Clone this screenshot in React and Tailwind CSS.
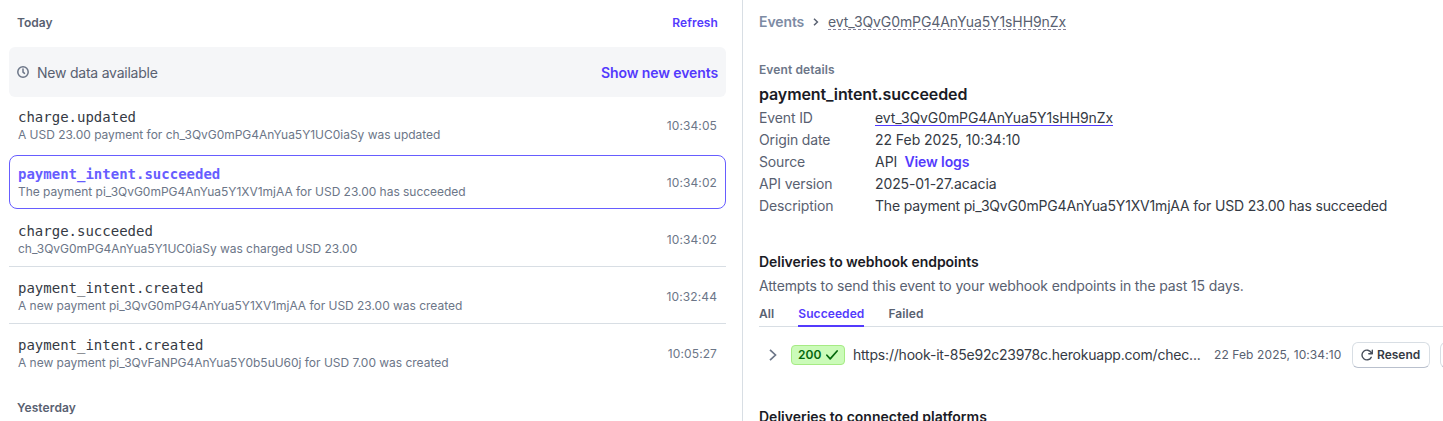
const events = [
  { type: "charge.updated", text: "A USD 23.00 payment for ch_3QvG0mPG4AnYua5Y1UC0iaSy was updated", time: "10:34:05", row: "h-14 pt-[11px]" },
  { type: "payment_intent.succeeded", text: "The payment pi_3QvG0mPG4AnYua5Y1XV1mjAA for USD 23.00 has succeeded", time: "10:34:02", selected: true, row: "mt-[2px] mb-px h-[54px] pt-[9px] rounded-lg border border-[#675dff]" },
  { type: "charge.succeeded", text: "ch_3QvG0mPG4AnYua5Y1UC0iaSy was charged USD 23.00", time: "10:34:02", row: "h-[57px] pt-3 border-b border-[#d8dee4]" },
  { type: "payment_intent.created", text: "A new payment pi_3QvG0mPG4AnYua5Y1XV1mjAA for USD 23.00 was created", time: "10:32:44", row: "h-[57px] pt-3 border-b border-[#d8dee4]" },
  { type: "payment_intent.created", text: "A new payment pi_3QvFaNPG4AnYua5Y0b5uU60j for USD 7.00 was created", time: "10:05:27", row: "h-[57px] pt-3" },
];

function EventRow({ event }) {
  return (
    <div className={`flex justify-between ${event.selected ? "px-2" : "px-[9px]"} ${event.row}`}>
      <div>
        <div className={`font-['DejaVu_Sans_Mono',monospace] text-sm leading-[18px] ${event.selected ? "font-bold text-[#675dff]" : "text-[#353a44]"}`}>{event.type}</div>
        <div className="mt-px text-xs leading-4 tracking-[-0.025px] text-[#6c7688]">{event.text}</div>
      </div>
      <div className="pt-[10px] text-xs leading-4 tracking-[0.1px] text-[#6c7688]">{event.time}</div>
    </div>
  );
}

function EventList() {
  return (
    <section className="w-[743px] shrink-0 border-r border-[#d8dee4] pr-4 pl-[9px]">
      <div className="flex h-[47px] items-start justify-between px-2 pt-[15px] text-xs leading-4 font-semibold">
        <h2 className="text-[#596171]">Today</h2>
        <button className="tracking-[0.1px] text-[#533afd]">Refresh</button>
      </div>
      <div className="flex h-[50px] items-center justify-between rounded-md bg-[#f5f6f8] px-2 pt-[2px] text-sm leading-5">
        <div className="flex items-center tracking-[-0.23px] text-[#596171]">
          <svg className="mr-2 size-3 -translate-y-px" viewBox="0 0 12 12" fill="none" stroke="#6c7688" strokeWidth="1.5" strokeLinecap="round" strokeLinejoin="round">
            <circle cx="6" cy="6" r="5.2" />
            <path d="M6 3v3.2l1.5 1.2" />
          </svg>
          New data available
        </div>
        <button className="font-semibold tracking-[-0.1px] text-[#533afd]">Show new events</button>
      </div>
      {events.map((event, i) => <EventRow key={i} event={event} />)}
      <h2 className="px-2 pt-[19px] text-xs leading-4 font-semibold tracking-[0.1px] text-[#596171]">Yesterday</h2>
    </section>
  );
}

function Detail({ label, children }) {
  return (
    <div className="flex h-[22px] text-sm leading-[22px]">
      <dt className="w-[116px] tracking-[-0.13px] text-[#596171]">{label}</dt>
      <dd className="text-[#353a44]">{children}</dd>
    </div>
  );
}

function EventDetails() {
  return (
    <section className="flex min-w-0 flex-1 flex-col pl-4">
      <nav className="flex h-[62px] shrink-0 items-start pt-3 text-sm leading-5">
        <span className="w-[45px] font-semibold tracking-[-0.1px] text-[#7d8ba4]">Events</span>
        <svg className="mx-[9px] mt-[6px] h-2 w-[6px]" viewBox="0 0 6 8" fill="none" stroke="#596171" strokeWidth="1.5">
          <path d="M1 .8 4.4 4 1 7.2" />
        </svg>
        <span className="h-[18px] border-b border-dashed border-[#87819a] tracking-[-0.1px] text-[#596171]">evt_3QvG0mPG4AnYua5Y1sHH9nZx</span>
      </nav>
      <p className="shrink-0 text-xs leading-4 font-semibold tracking-[0.1px] text-[#6c7688]">Event details</p>
      <h1 className="mt-1 h-[25px] shrink-0 text-base leading-6 font-semibold tracking-[-0.1px] text-[#1a1b25]">payment_intent.succeeded</h1>
      <dl className="shrink-0">
        <Detail label="Event ID"><span className="block h-[19px] border-b border-[#533afd] tracking-[-0.1px]">evt_3QvG0mPG4AnYua5Y1sHH9nZx</span></Detail>
        <Detail label="Origin date"><span className="tracking-[-0.05px]">22 Feb 2025, 10:34:10</span></Detail>
        <Detail label="Source">API<button className="ml-[7px] font-semibold tracking-[-0.1px] text-[#533afd]">View logs</button></Detail>
        <Detail label="API version"><span className="tracking-[-0.1px]">2025-01-27.acacia</span></Detail>
        <Detail label="Description"><span className="tracking-[-0.18px]">The payment pi_3QvG0mPG4AnYua5Y1XV1mjAA for USD 23.00 has succeeded</span></Detail>
      </dl>
      <h2 className="mt-[35px] shrink-0 text-sm leading-5 font-semibold tracking-[-0.04px] text-[#1a1b25]">Deliveries to webhook endpoints</h2>
      <p className="mt-1 shrink-0 text-sm leading-5 tracking-[-0.14px] text-[#596171]">Attempts to send this event to your webhook endpoints in the past 15 days.</p>
      <div className="mt-[9px] flex h-[22px] shrink-0 gap-6 border-b border-[#d8dee4] text-xs leading-4 font-semibold tracking-[0.08px] text-[#596171]">
        <button className="h-[22px] pt-px pb-[5px]">All</button>
        <button className="h-[22px] border-b-2 border-[#533afd] pt-px pb-[3px] text-[#533afd]">Succeeded</button>
        <button className="h-[22px] pt-px pb-[5px]">Failed</button>
      </div>
      <div className="mt-[15px] flex h-[26px] shrink-0 items-center overflow-hidden">
        <svg className="ml-[10px] h-3 w-2 shrink-0" viewBox="0 0 8 12" fill="none" stroke="#6c7688" strokeWidth="1.7">
          <path d="M1 .8 6.5 6 1 11.2" />
        </svg>
        <span className="ml-[14px] flex h-5 w-[54px] shrink-0 items-center justify-between rounded border border-[#a6eb84] bg-[#cbfbb9] px-[6px] text-xs font-semibold text-[#05690d]">
          200
          <svg className="h-[10px] w-3" viewBox="0 0 12 10" fill="none" stroke="currentColor" strokeWidth="1.7" strokeLinecap="round" strokeLinejoin="round">
            <path d="M.9 5.2 4.2 8.9 11.1 1" />
          </svg>
        </span>
        <span className="ml-2 w-[348px] shrink-0 text-sm leading-5 tracking-[-0.2px] whitespace-nowrap text-[#353a44]">https://hook-it-85e92c23978c.herokuapp.com/chec...</span>
        <span className="ml-[13px] w-[138px] shrink-0 text-xs tracking-[0.1px] whitespace-nowrap text-[#596171]">22 Feb 2025, 10:34:10</span>
        <button className="flex h-[26px] w-[78px] shrink-0 items-center rounded-md border border-[#d8dee4] border-b-[#b9c0cd] pl-2 text-xs font-semibold text-[#353a44]">
          <svg className="mr-1 size-3" viewBox="0 0 12 12" fill="none" stroke="#474e5a" strokeWidth="1.4" strokeLinecap="round" strokeLinejoin="round">
            <path d="M10.2 8.3A4.9 4.9 0 1 1 10.2 3.7L11 4.6M11.3 1.2v3.5H7.8" />
          </svg>
          Resend
        </button>
        <button aria-label="More" className="ml-[10px] h-[26px] w-8 shrink-0 rounded-md border border-[#d8dee4] border-b-[#b9c0cd]" />
      </div>
      <h2 className="mt-[39px] shrink-0 text-sm leading-5 font-semibold text-[#1a1b25]">Deliveries to connected platforms</h2>
    </section>
  );
}

export default function App() {
  return (
    <main className="flex h-[421px] w-full overflow-hidden bg-white font-['Inter',sans-serif]">
      <EventList />
      <EventDetails />
    </main>
  );
}
